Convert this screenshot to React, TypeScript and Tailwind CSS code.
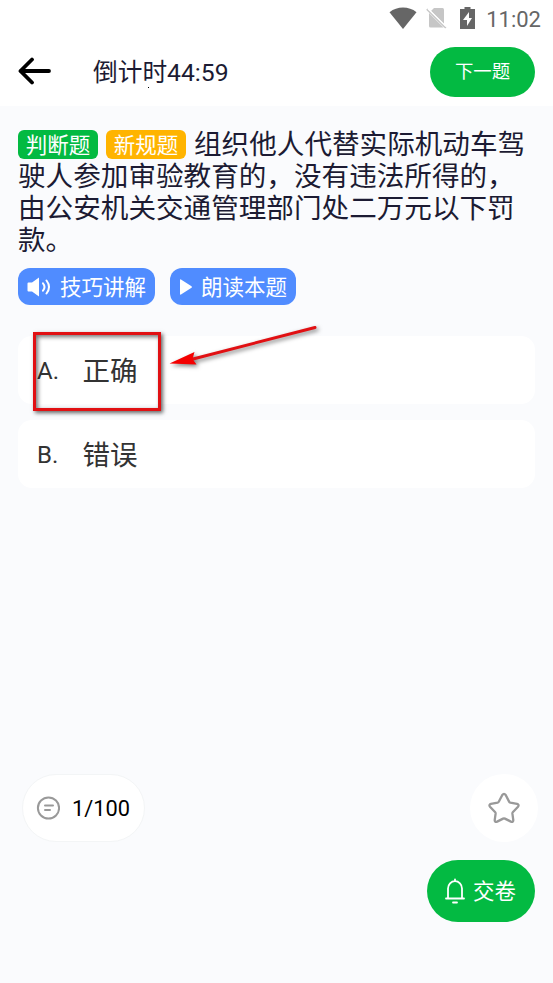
import type { ReactNode } from 'react';

function StatusBar() {
  return (
    <div className="flex h-9 items-center justify-end pr-[12px] text-[#666666]">
      <svg className="mr-[9px] h-[22px] w-[28px]" viewBox="0 0 28 22" fill="currentColor">
        <path d="M14 22 .5 5.2C4.500 2.100 9 .6 14 .6s9.500 1.500 13.500 4.600Z" />
      </svg>
      <svg className="mr-[13px] h-[22px] w-[21px]" viewBox="0 0 21 22" fill="none">
        <path d="M8 1H16.500q1.500 0 1.500 1.500V17L5 4Z" fill="#c6c6c6" />
        <path d="M3 6 17.500 20.500H4.500Q3 20.500 3 19Z" fill="#c6c6c6" />
        <path d="m.8 2.200 19 18.700" stroke="#c6c6c6" strokeWidth="1.800" />
        <path d="m2 1.800 18 17.700" stroke="#fff" strokeWidth="1.200" />
      </svg>
      <svg className="mr-[11px] h-[22px] w-[15px]" viewBox="0 0 15 22" fill="currentColor">
        <path fillRule="evenodd" d="M4.500 0h6v2H15v20H0V2h4.500ZM9 5l-6 8h4v6l5-8H9Z" />
      </svg>
      <span className="pt-[3px] text-[22px] leading-8">11:02</span>
    </div>
  );
}

function Tag({ className, children }: { className: string; children: ReactNode }) {
  return (
    <span className={`mt-px mr-2 inline-block h-[29px] w-[80px] rounded-[6px] text-center align-top text-[21.5px] leading-[31px] text-white ${className}`}>
      {children}
    </span>
  );
}

function Option({ letter, text }: { letter: string; text: string }) {
  return (
    <div className="flex h-[68px] items-center rounded-[14px] bg-white pl-[19px] text-[#333333]">
      <span className="w-[45.5px] pt-px text-[24px]">{letter}.</span>
      <span className="pt-[3px] text-[27.5px]">{text}</span>
    </div>
  );
}

export default function App() {
  return (
    <div className="relative flex h-[983px] w-[553px] flex-col overflow-hidden bg-[#fafbfd] font-[Roboto,'Noto_Sans_CJK_SC',sans-serif]">
      <header className="h-[106px] shrink-0 bg-white">
        <StatusBar />
        <div className="flex h-[70px] items-center pr-[18px] pl-[18px]">
          <svg className="h-7 w-[33px]" viewBox="0 0 33 28" fill="none" stroke="#000" strokeWidth="3.800" strokeLinecap="round" strokeLinejoin="round">
            <path d="M14 2.500 2.500 14 14 25.500M2.500 14H31" />
          </svg>
          <h1 className="ml-[42px] pt-[3px] text-[24.700px] leading-8 text-[#1c1b33]">倒计时44:59</h1>
          <button className="mt-px ml-auto h-[50px] w-[105px] rounded-full bg-[#03ba42] pt-px text-[18.400px] text-white">下一题</button>
        </div>
      </header>

      <main className="px-[18px] pt-[23px]">
        <p className="h-32 text-[27.600px] leading-8 whitespace-nowrap text-[#1c1b33]">
          <Tag className="bg-[#03ba42]">判断题</Tag>
          <Tag className="bg-[#ffb400]">新规题</Tag>
          组织他人代替实际机动车驾<br />
          驶人参加审验教育的，没有违法所得的，<br />
          由公安机关交通管理部门处二万元以下罚<br />
          款。
        </p>
        <div className="mt-[11px] flex gap-[15px] text-[21.500px] text-white">
          <button className="flex h-[37px] w-[137px] items-center rounded-[12px] bg-[#508cff] pl-[9px]">
            <svg className="mr-[9px] h-5 w-6" viewBox="0 0 24 20" fill="none">
              <path d="M1.500 5.500H5L12 .5v19L5 14.500H1.500Q.5 14.500.5 13.500v-7Q.5 5.500 1.500 5.500Z" fill="white" />
              <path d="M16 6.300q3 3.700 0 7.400M19.500 3.500q5 6.500 0 13" stroke="white" strokeWidth="2" strokeLinecap="round" />
            </svg>
            <span className="pt-[3px]">技巧讲解</span>
          </button>
          <button className="flex h-[37px] w-[126px] items-center rounded-[12px] bg-[#508cff] pl-[10px]">
            <svg className="mr-[9px] h-4 w-3" viewBox="0 0 12 16" fill="white">
              <path d="M0 1Q0 0 1 .5l10.500 6.700q.8.800 0 1.600L1 15.500Q0 16 0 15Z" />
            </svg>
            <span className="pt-[3px]">朗读本题</span>
          </button>
        </div>
        <div className="mt-[31px] flex flex-col gap-4">
          <Option letter="A" text="正确" />
          <Option letter="B" text="错误" />
        </div>
      </main>

      <footer className="mt-auto pb-[61px]">
        <div className="flex items-center justify-between pr-[15px] pl-[22px]">
          <div className="flex h-[68px] w-[123px] items-center rounded-full border border-[#f3f5f6] bg-white pl-[13px]">
            <svg className="mr-3 h-6 w-6" viewBox="0 0 24 24" fill="none" stroke="#999" strokeWidth="2" strokeLinecap="round">
              <circle cx="12.500" cy="12" r="10.600" />
              <path d="M9 9.500h8M9 14h5" />
            </svg>
            <span className="pt-[2px] text-[21.800px] text-black">1/100</span>
          </div>
          <button className="flex h-[68px] w-[68px] items-center justify-center rounded-full bg-white">
            <svg className="h-[32px] w-[32px]" viewBox="0 0 32 32" fill="none" stroke="#999" strokeWidth="2.300" strokeLinejoin="round">
              <path d="M14.300 3q1.700-2.400 3.400 0l3.400 6.600q.4.800 1.200 1l6.800 1.300q2.400.8.900 2.800l-5 5.300q-.7.800-.6 1.700l.9 6.400q-.1 2.400-2.400 1.500l-6-3q-.9-.4-1.800 0l-6 3q-2.300.9-2.400-1.500l.9-6.400q.1-.9-.6-1.700l-5-5.300q-1.500-2 .9-2.800l6.800-1.300q.8-.2 1.200-1Z" />
            </svg>
          </button>
        </div>
        <button className="mt-[18px] mr-[18px] ml-auto flex h-[62px] w-[108px] items-center rounded-full bg-[#03ba42] pl-[18px] text-[21.500px] text-white">
          <svg className="mr-2 h-[26px] w-5" viewBox="0 0 20 26" fill="none" stroke="white" strokeWidth="1.800" strokeLinecap="round" strokeLinejoin="round">
            <path d="M10 1.300V3M3 20V10.500a7 7.300 0 0 1 14 0V20M1 20.500h18M8 24.500h4" />
          </svg>
          <span className="pt-[3px]">交卷</span>
        </button>
      </footer>

      <div className="absolute top-[332px] left-[33px] h-[79px] w-[128px] border-[3px] border-[#e11013] shadow-[2px_2px_4px_rgba(0,0,0,0.6),inset_2px_2px_4px_rgba(0,0,0,0.55)]" />
      <svg className="absolute top-[318px] left-[164px] h-14 w-[160px] drop-shadow-[2px_2px_2px_rgba(0,0,0,0.5)]" viewBox="164 318 160 56">
        <path d="m193 359 122-31.500" stroke="#e11013" strokeWidth="3" strokeLinecap="round" />
        <path d="m169.500 363.500 25-11.500-2 7 4 5.500Z" fill="#f40000" />
      </svg>
      <span className="absolute top-[87px] left-[148px] h-px w-px bg-black" />
    </div>
  );
}
